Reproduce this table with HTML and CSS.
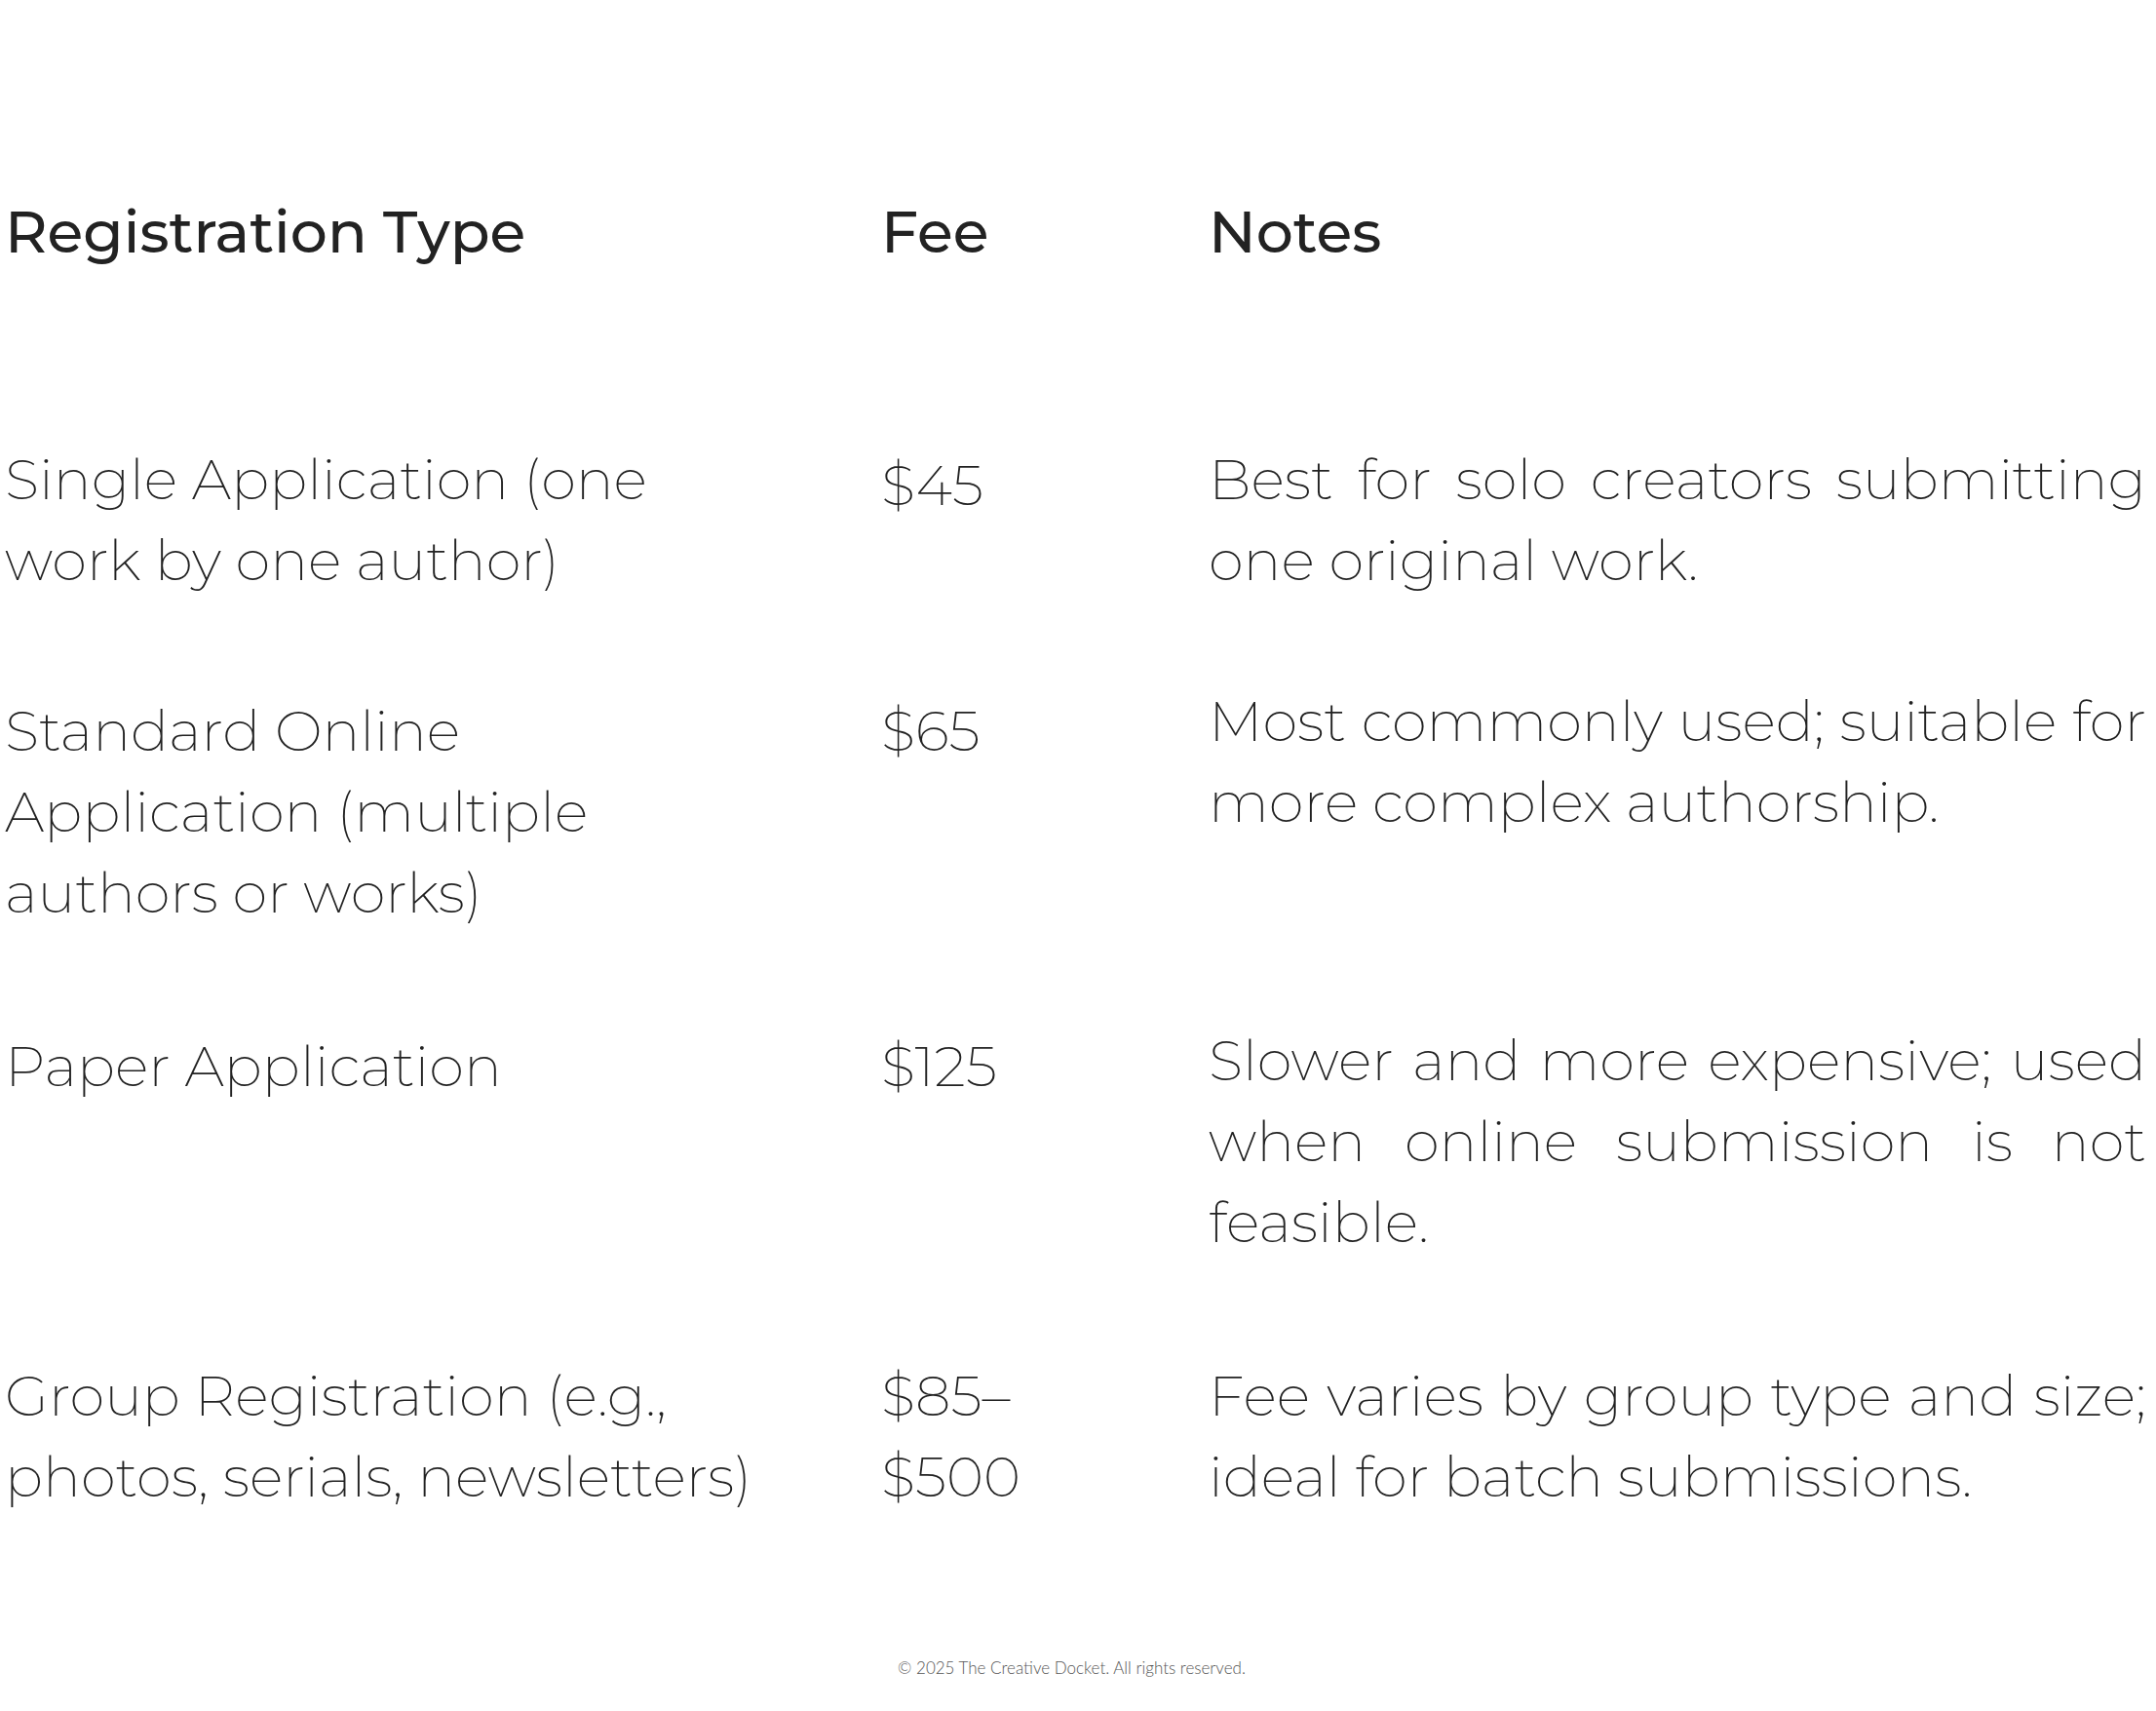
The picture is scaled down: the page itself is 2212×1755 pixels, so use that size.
FILE: index.html
```html
<!DOCTYPE html>
<html lang="en">
<head>
<meta charset="utf-8">
<title>Copyright Registration Fees</title>
<link rel="stylesheet" href="styles.css">
</head>
<body>
<main class="page">
  <div class="fee-table" role="table">
    <div class="row head" role="row">
      <div class="cell type" role="columnheader">Registration Type</div>
      <div class="cell fee" role="columnheader">Fee</div>
      <div class="cell notes" role="columnheader">Notes</div>
    </div>
    <div class="row" role="row">
      <div class="cell type" role="cell">Single Application (one work by one author)</div>
      <div class="cell fee fee-low" role="cell">$45</div>
      <div class="cell notes" role="cell">Best for solo creators submitting one original work.</div>
    </div>
    <div class="row" role="row">
      <div class="cell type" role="cell">Standard Online Application (multiple authors or works)</div>
      <div class="cell fee" role="cell">$65</div>
      <div class="cell notes notes-up" role="cell">Most commonly used; suitable for more complex authorship.</div>
    </div>
    <div class="row row-3" role="row">
      <div class="cell type" role="cell">Paper Application</div>
      <div class="cell fee" role="cell">$125</div>
      <div class="cell notes notes-up-sm" role="cell">Slower and more expensive; used when online submission is not feasible.</div>
    </div>
    <div class="row" role="row">
      <div class="cell type" role="cell">Group Registration (e.g., photos, serials, newsletters)</div>
      <div class="cell fee" role="cell">$85–$500</div>
      <div class="cell notes" role="cell">Fee varies by group type and size; ideal for batch submissions.</div>
    </div>
  </div>
  <footer class="footer">© 2025 The Creative Docket. All rights reserved.</footer>
</main>
</body>
</html>
```

FILE: styles.css
```css
html, body {
  margin: 0;
  background: #ffffff;
}

body {
  color: #222222;
  font-family: Montserrat, Inter, "Noto Sans", sans-serif;
}

.page {
  padding: 196px 10px 0 5px;
}

.fee-table {
  display: grid;
  grid-template-columns: 899px 336px 1fr;
}

.row {
  display: contents;
}

.cell {
  font-size: 58px;
  line-height: 83px;
  font-weight: 200;
  padding: 46px 0;
  color: #222222;
}

.type {
  padding-right: 100px;
}

.fee {
  padding-right: 90px;
}

.notes {
  text-align: justify;
}

.head .cell {
  font-size: 60px;
  font-weight: 500;
  padding-top: 0;
  padding-bottom: 125px;
  color: #222222;
}

.fee-low {
  padding-top: 52px;
  padding-bottom: 40px;
}

.notes-up {
  padding-top: 36px;
  padding-bottom: 56px;
}

.row-3 .cell {
  padding-top: 49px;
  padding-bottom: 43px;
}

.row-3 .notes-up-sm {
  padding-top: 43px;
  padding-bottom: 49px;
}

.footer {
  margin-top: 97px;
  padding-right: 8px;
  text-align: center;
  font-family: Lato, "Open Sans", sans-serif;
  font-weight: 300;
  font-size: 17px;
  line-height: 24px;
  color: #555555;
}
```
